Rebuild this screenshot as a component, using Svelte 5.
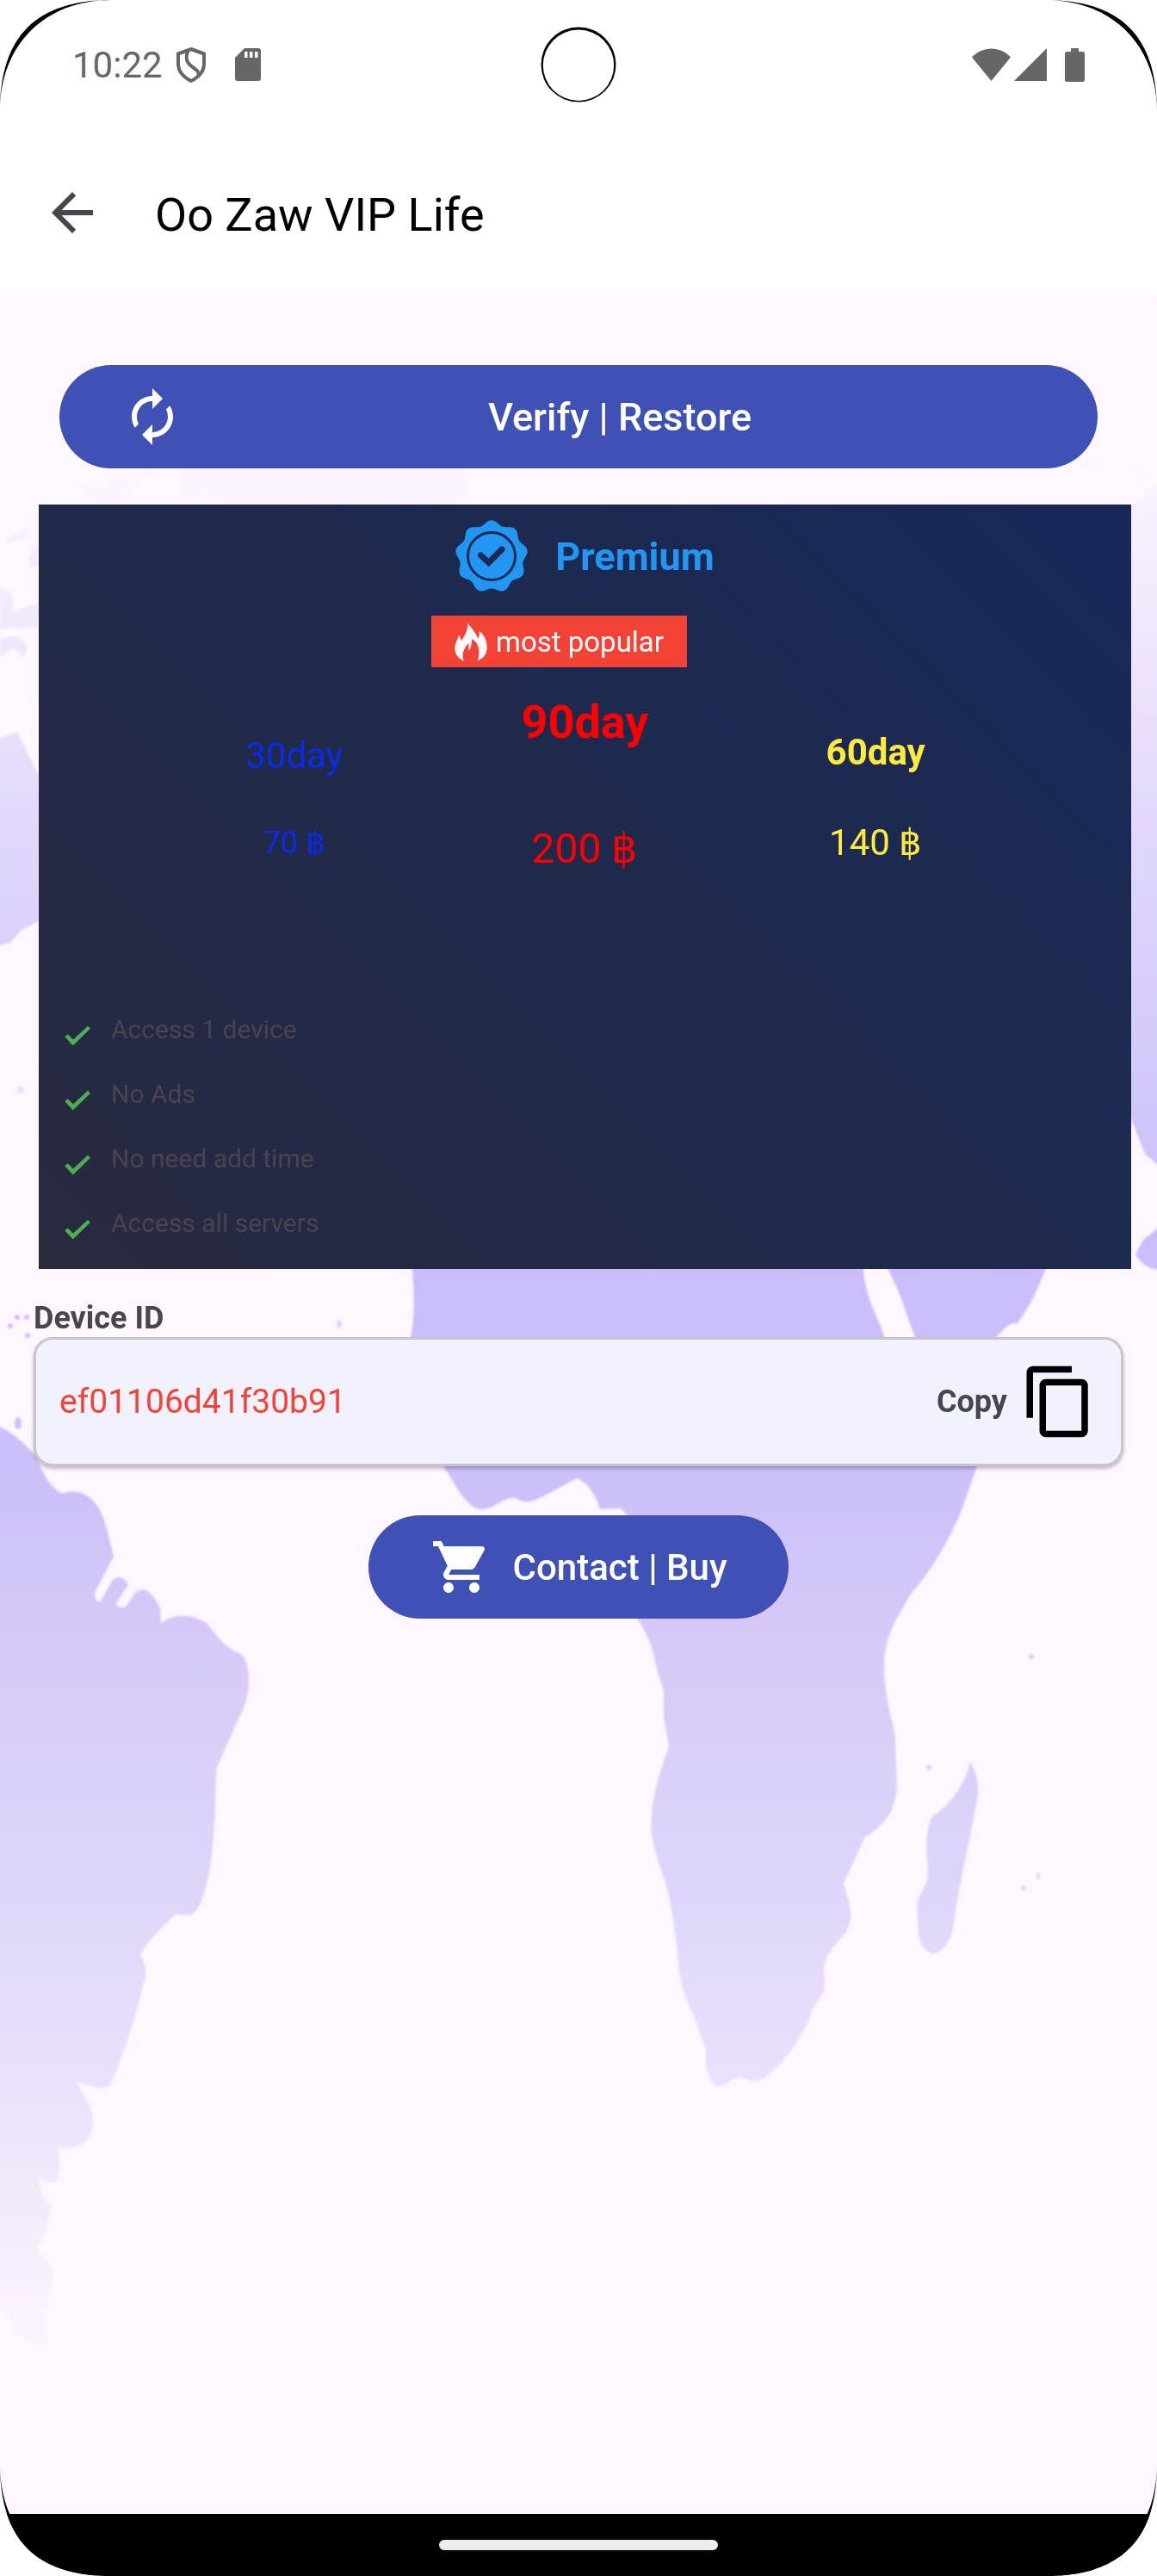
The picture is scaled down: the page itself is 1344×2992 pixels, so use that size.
<script>
  const plans = [
    { name: '30day', price: '70 ฿', tone: 'basic' },
    { name: '90day', price: '200 ฿', tone: 'featured' },
    { name: '60day', price: '140 ฿', tone: 'mid' },
  ];
  const features = ['Access 1 device', 'No Ads', 'No need add time', 'Access all servers'];
  const corners = ['top-left', 'top-right', 'bottom-left', 'bottom-right'];
  const deviceId = 'ef01106d41f30b91';

  // Nine-lobed seal outline, centred in an 84-unit box
  const seal =
    'M' +
    Array.from({ length: 180 }, (_, i) => {
      const a = (i * Math.PI) / 90;
      const r = 39.6 + 2.6 * Math.cos(9 * a);
      return `${(42 + r * Math.sin(a)).toFixed(2)} ${(42.5 - r * Math.cos(a)).toFixed(2)}`;
    }).join('L') +
    'Z';
</script>

<div class="screen">
  <div class="status">
    <div class="status-left">
      <span>10:22</span>
      <svg class="shield" viewBox="0 0 34 41" aria-hidden="true">
        <path d="M17 2 32 7.500V19C32 28 26 34.500 17 39 8 34.500 2 28 2 19V7.500Z" />
        <path d="M13.500 4C10 12 11.500 17 17 21.500 23 26 26.500 28 25.500 32.500" />
      </svg>
      <svg class="sd" viewBox="0 0 30 38" aria-hidden="true">
        <path fill-rule="evenodd" d="M11 0H27A3 3 0 0 1 30 3V35A3 3 0 0 1 27 38H3A3 3 0 0 1 0 35V11ZM11 4V11H14.500V4ZM17 4V11H20.500V4ZM23 4V11H26.500V4Z" />
      </svg>
    </div>
    <svg class="camera" viewBox="0 0 88 88" aria-hidden="true">
      <circle cx="44" cy="44" r="43.500" fill="#000" />
      <circle cx="44" cy="44.800" r="41.200" fill="#fff" />
    </svg>
    <div class="status-right">
      <svg class="wifi" viewBox="0 0 45 38" aria-hidden="true"><path d="M22.500 38 0 10.500C6 4 14 .5 22.500 .5S39 4 45 10.500Z" /></svg>
      <svg class="signal" viewBox="0 0 38 38" aria-hidden="true"><path d="M38 0V38H0Z" /></svg>
      <svg class="battery" viewBox="0 0 23 39" aria-hidden="true"><path d="M7 0h9v4h4.500A2.500 2.500 0 0 1 23 6.500v30A2.500 2.500 0 0 1 20.500 39h-18A2.500 2.500 0 0 1 0 36.500v-30A2.500 2.500 0 0 1 2.500 4H7Z" /></svg>
    </div>
  </div>

  <header class="appbar">
    <button class="back" aria-label="Back">
      <svg viewBox="0 0 24 24" aria-hidden="true"><path d="M20 11H7.830l5.590-5.590L12 4l-8 8 8 8 1.410-1.410L7.830 13H20z" /></svg>
    </button>
    <h1>Oo Zaw VIP Life</h1>
  </header>

  <main>
    <svg class="map" viewBox="0 343 1344 2577" preserveAspectRatio="xMidYMin slice" aria-hidden="true">
      <defs>
        <linearGradient id="land" gradientUnits="userSpaceOnUse" x1="0" y1="480" x2="0" y2="2760">
          <stop offset="0" stop-color="#fef7ff" />
          <stop offset=".06" stop-color="#f7effd" />
          <stop offset=".2" stop-color="#e3d9fb" />
          <stop offset=".42" stop-color="#cbbdfa" />
          <stop offset=".55" stop-color="#cdc0f9" />
          <stop offset=".63" stop-color="#d7caf7" />
          <stop offset=".74" stop-color="#ddd5f9" />
          <stop offset=".83" stop-color="#e8defb" />
          <stop offset=".92" stop-color="#f4ebfc" />
          <stop offset="1" stop-color="#fef7ff" />
        </linearGradient>
        <filter id="soft"><feGaussianBlur stdDeviation="1" /></filter>
      </defs>
      <g fill="url(#land)" filter="url(#soft)">
        <path d="M-9 1654 0 1657C18 1666 30 1678 42 1692 52 1718 62 1730 73 1735 80 1730 98 1732 107 1742 118 1752 123 1768 132 1808L110 1850Q110 1862 117 1860L130 1836Q142 1826 149 1841L135 1862Q138 1870 146 1866L157 1850Q172 1838 186 1868L187 1885C205 1872 225 1876 240 1885 252 1902 265 1916 280 1921 292 1932 292 1968 280 1990 270 2012 262 2030 252 2053Q250 2075 250 2097C249 2140 243 2195 230 2216 222 2230 212 2222 203 2224 190 2238 175 2250 163 2270Q171 2286 169 2296L157 2342 147 2373 130 2419Q122 2432 88 2417L104 2445Q112 2464 104 2482 92 2498 67 2495 72 2514 67 2533 56 2538 45 2530 48 2554 60 2562L54 2588 43 2614Q64 2630 61 2655L52 2687 53 2721H30L-9 2665Z" />
        <path d="M475 1440C480 1480 484 1520 477 1553 474 1600 490 1660 515 1703 528 1722 538 1745 553 1752 572 1758 582 1738 599 1740 612 1750 625 1740 637 1735L670 1717Q688 1724 697 1753L721 1752 729 1760 740 1880C752 1898 758 1912 762 1935L771 1965V1996L777 2028C768 2055 754 2090 757 2130 760 2155 772 2180 776 2198 782 2225 786 2255 789 2290 792 2315 804 2335 809 2350L820 2380V2400Q824 2420 832 2423C845 2424 850 2412 862 2413 875 2420 885 2418 895 2408 915 2392 930 2365 939 2348L943 2335 958 2311Q958 2295 957 2285C960 2265 975 2256 983 2243 993 2225 986 2208 980 2188L1004 2135C1018 2125 1035 2112 1038 2095 1045 2080 1040 2050 1040 2016 1036 1995 1026 1965 1027 1929 1030 1895 1042 1880 1059 1850 1090 1815 1112 1770 1122 1740L1135 1703 1063 1640 1027 1553C1022 1530 1006 1515 1003 1474V1440Z" />
        <path d="M1018 1440C1030 1474 1040 1490 1047 1508 1054 1530 1062 1550 1063 1553L1135 1600 1158 1552C1166 1545 1170 1536 1182 1537 1198 1515 1206 1495 1215 1474V1440Z" />
        <path d="M1127 2046Q1138 2066 1136 2085L1128 2127 1115 2190 1106 2245Q1098 2268 1082 2269 1068 2262 1067 2245L1065 2214C1066 2200 1079 2190 1078 2174 1076 2155 1074 2130 1082 2111 1102 2098 1122 2072 1127 2046Z" />
        <path d="M1353 550C1330 580 1318 582 1310 590V1290L1330 1340 1353 1360ZM1353 1420 1328 1440 1319 1457Q1332 1478 1353 1474Z" />
        <path d="M92 566 110 562 120 572 130 560 160 550 185 542 150 565 135 582H115ZM212 545H538L541 575 520 590H270L240 570 212 578Z" opacity=".7" />
        <path d="M1255 542 1270 532 1285 538 1275 545ZM1300 540 1320 545 1318 550ZM1315 548 1335 555 1325 565Z" opacity=".3" />
        <path d="M8 625 34 612 30 625 6 632ZM45 630Q28 650 36 660L45 655ZM0 682 14 690 16 710 45 700V728L0 730ZM0 742 20 738 32 750 28 764 15 752 0 762Z" />
        <path d="M-9 860 20 850 45 900V1070L25 1080 12 1095 -9 1100Z" />
        <ellipse cx="21" cy="1653" rx="4" ry="7" /><circle cx="24" cy="1266" r="4" opacity=".5" />
        <circle cx="20" cy="1530" r="3" /><circle cx="31" cy="1530" r="3" /><circle cx="12" cy="1540" r="3" /><circle cx="32" cy="1551" r="3" />
        <ellipse cx="394" cy="1538" rx="3" ry="5" opacity=".6" /><circle cx="1198" cy="1924" r="3" /><circle cx="1079" cy="2053" r="3" />
        <circle cx="1189" cy="2193" r="3" /><ellipse cx="1206" cy="2179" rx="2" ry="4" />
      </g>
    </svg>

    <div class="content">
      <button class="pill verify">
        <svg viewBox="0 0 24 24" aria-hidden="true"><path d="M12 6v3l4-4-4-4v3c-4.420 0-8 3.580-8 8 0 1.570.46 3.030 1.240 4.260L6.700 14.800c-.45-.83-.7-1.790-.7-2.800 0-3.310 2.690-6 6-6zm6.760 1.740L17.300 9.200c.44.84.7 1.790.7 2.800 0 3.310-2.690 6-6 6v-3l-4 4 4 4v-3c4.420 0 8-3.580 8-8 0-1.570-.46-3.030-1.240-4.260z" /></svg>
        <span>Verify | Restore</span>
      </button>

      <section class="card">
        <div class="premium">
          <svg viewBox="0 0 84 84" aria-hidden="true">
            <path d={seal} fill="#2196f3" />
            <circle cx="42" cy="42" r="27.500" fill="none" stroke="#1e294f" stroke-width="3" />
            <path d="M29.500 41 38.700 49.500 54 34" fill="none" stroke="#1e294f" stroke-width="7" stroke-linecap="round" />
          </svg>
          <h2>Premium</h2>
        </div>
        <div class="popular">
          <svg viewBox="135 430 115 133" aria-hidden="true">
            <path d="M182 430C188 444 205 454 218 486Q224 472 222 459C240 472 250 495 249 518 249 542 235 556 215 563 226 540 224 500 196 487Q196 510 186 529 184 515 185 500C168 518 158 542 168 563 148 556 135 538 136 518 137 500 146 490 150 472Q158 482 158 493C172 476 182 456 182 430Z" />
          </svg>
          <span>most popular</span>
        </div>
        <div class="plans">
          {#each plans as plan}
            <div class="plan {plan.tone}">
              <span class="name">{plan.name}</span>
              <span class="price">{plan.price}</span>
            </div>
          {/each}
        </div>
        <ul class="features">
          {#each features as feature}
            <li>
              <svg viewBox="0 0 50 50" aria-hidden="true"><path d="M10.300 26.300 13.700 23.300 20 29.500 37 13.700 40 16.700 19.700 36.600Z" /></svg>
              <span>{feature}</span>
            </li>
          {/each}
        </ul>
      </section>

      <h3>Device ID</h3>
      <div class="device">
        <span class="id">{deviceId}</span>
        <button class="copy">
          Copy
          <svg viewBox="0 0 24 24" aria-hidden="true"><path d="M16 1H4c-1.100 0-2 .9-2 2v14h2V3h12V1zm3 4H8c-1.100 0-2 .9-2 2v14c0 1.100.9 2 2 2h11c1.100 0 2-.9 2-2V7c0-1.100-.9-2-2-2zm0 16H8V7h11v14z" /></svg>
        </button>
      </div>

      <button class="pill contact">
        <svg viewBox="0 0 24 24" aria-hidden="true"><path d="M7 18c-1.100 0-1.990.9-1.990 2S5.900 22 7 22s2-.9 2-2-.9-2-2-2zM1 2v2h2l3.600 7.590-1.350 2.450c-.16.28-.25.61-.25.96 0 1.100.9 2 2 2h12v-2H7.420c-.14 0-.25-.11-.25-.25l.03-.12.900-1.630h7.450c.75 0 1.410-.41 1.750-1.030l3.580-6.490c.08-.14.12-.31.12-.48 0-.55-.45-1-1-1H5.210l-.94-2H1zm16 16c-1.100 0-1.990.9-1.990 2s.89 2 1.990 2 2-.9 2-2-.9-2-2-2z" /></svg>
        <span>Contact | Buy</span>
      </button>
    </div>
  </main>

  <nav class="gesture"><span class="handle"></span></nav>

  {#each corners as corner}
    <svg class="corner {corner}" viewBox="0 0 130 130" aria-hidden="true">
      <path d="M0 0H130C42 0 0 42 0 130Z" fill="#fff" />
      <path d="M0 130C0 42 42 0 130 0 52 0 0 52 0 130Z" />
    </svg>
  {/each}
</div>

<style>
  :global(body) {
    background: #fff;
  }

  .screen {
    position: relative;
    display: flex;
    flex-direction: column;
    min-height: 100vh;
    overflow: hidden;
    background: #fff;
    font-family: Roboto, 'Noto Sans', sans-serif;
  }

  svg {
    display: block;
    flex: none;
  }

  button {
    border: 0;
    padding: 0;
    background: none;
    font: inherit;
    cursor: pointer;
  }

  h1,
  h2,
  h3,
  ul {
    margin: 0;
    padding: 0;
  }

  .status {
    display: grid;
    grid-template-columns: 1fr auto 1fr;
    align-items: center;
    height: 150px;
    padding: 0 84px;
    color: #666;
    font-size: 42px;
  }

  .status-left,
  .status-right {
    display: flex;
    align-items: center;
  }

  .status-right {
    justify-content: flex-end;
    fill: #666;
  }

  .shield {
    width: 34px;
    height: 41px;
    margin: 0 34px 0 16px;
    fill: none;
    stroke: #666;
    stroke-width: 4;
  }

  .sd {
    width: 30px;
    height: 38px;
    fill: #666;
  }

  .camera {
    width: 88px;
    height: 88px;
  }

  .wifi {
    width: 45px;
    height: 38px;
    margin-right: 4px;
  }

  .signal {
    width: 38px;
    height: 38px;
    margin-right: 21px;
  }

  .battery {
    width: 23px;
    height: 39px;
  }

  .appbar {
    display: flex;
    align-items: flex-start;
    gap: 60px;
    padding: 61px 48px 54px;
  }

  .back svg {
    width: 72px;
    height: 72px;
    fill: #49454f;
  }

  h1 {
    color: #000;
    font-size: 54px;
    font-weight: 400;
    line-height: 78px;
  }

  main {
    position: relative;
    flex: 1;
    background: #fef7ff;
  }

  .map {
    position: absolute;
    inset: 0;
    width: 100%;
    height: 100%;
  }

  .content {
    position: relative;
    display: flex;
    flex-direction: column;
    padding: 81px 0 120px;
  }

  .pill {
    display: flex;
    align-items: center;
    gap: 24px;
    height: 120px;
    padding: 0 72px;
    border-radius: 60px;
    background: #3f51b5;
    color: #fff;
    font-weight: 500;
  }

  .pill svg {
    width: 72px;
    height: 72px;
    fill: #fff;
  }

  .verify {
    margin: 0 69px;
    font-size: 45px;
  }

  .verify span {
    flex: 1;
    text-align: center;
  }

  .contact {
    align-self: center;
    margin-top: 57px;
    font-size: 42px;
  }

  .card {
    display: flex;
    flex-direction: column;
    align-items: center;
    margin: 42px 30px 0 45px;
    padding: 18px 20px 21px;
    background: linear-gradient(45deg, #292a3d, #252946 20%, #1f2a4b 50%, #17285a);
  }

  .premium {
    display: flex;
    align-items: center;
    gap: 32px;
    height: 84px;
  }

  .premium svg {
    width: 84px;
    height: 84px;
  }

  h2 {
    color: #2196f3;
    font-size: 45px;
    font-weight: 700;
  }

  .popular {
    display: flex;
    align-items: center;
    gap: 10px;
    height: 60px;
    margin: 27px 60px 0 0;
    padding: 0 27px;
    background: #f44336;
    color: #fff;
    font-size: 33px;
  }

  .popular svg {
    width: 38px;
    height: 45px;
    fill: #fafafa;
  }

  .plans {
    display: grid;
    grid-template-columns: repeat(3, 1fr);
    align-self: stretch;
    margin: 36px 108px 0;
  }

  .plan {
    display: flex;
    flex-direction: column;
    align-items: center;
    font-size: 42px;
    line-height: 56px;
  }

  .basic {
    gap: 45px;
    padding-top: 39px;
    color: #0a2be8;
  }

  .basic .price {
    font-size: 36px;
  }

  .featured {
    gap: 91px;
    color: #f00;
  }

  .featured .name {
    font-size: 54px;
    font-weight: 700;
  }

  .featured .price {
    font-size: 48px;
  }

  .mid {
    gap: 49px;
    padding-top: 35px;
    color: #ffeb3b;
  }

  .mid .name {
    font-weight: 700;
  }

  .features {
    display: flex;
    flex-direction: column;
    align-self: stretch;
    gap: 25px;
    margin-top: 164px;
    color: #49454f;
    font-size: 30px;
    line-height: 36px;
    list-style: none;
  }

  .features li {
    display: flex;
    gap: 14px;
  }

  .features svg {
    width: 50px;
    height: 50px;
    fill: #4caf50;
  }

  h3 {
    margin: 36px 39px 0;
    color: #49454f;
    font-size: 36px;
    font-weight: 700;
    line-height: 43px;
  }

  .device {
    display: flex;
    align-items: center;
    justify-content: space-between;
    height: 144px;
    margin: 0 39px;
    padding: 0 27px;
    border: 3px solid #cac4d0;
    border-radius: 22px;
    background: #f2f2fe;
    box-shadow: 0 3px 4px rgba(0, 0, 0, 0.25);
  }

  .id {
    color: #f44336;
    font-size: 39px;
  }

  .copy {
    display: flex;
    align-items: center;
    gap: 15px;
    color: #49454f;
    font-size: 36px;
    font-weight: 700;
  }

  .copy svg {
    width: 90px;
    height: 90px;
    fill: #000;
  }

  .gesture {
    display: flex;
    align-items: center;
    justify-content: center;
    height: 72px;
    background: #000;
  }

  .handle {
    width: 324px;
    height: 12px;
    border-radius: 6px;
    background: #ebebeb;
  }

  .corner {
    position: absolute;
    width: 130px;
    height: 130px;
  }

  .top-left {
    top: 0;
    left: 0;
  }

  .top-right {
    top: 0;
    right: 0;
    transform: scaleX(-1);
  }

  .bottom-left {
    bottom: 0;
    left: 0;
    transform: scaleY(-1);
  }

  .bottom-right {
    right: 0;
    bottom: 0;
    transform: scale(-1);
  }
</style>
